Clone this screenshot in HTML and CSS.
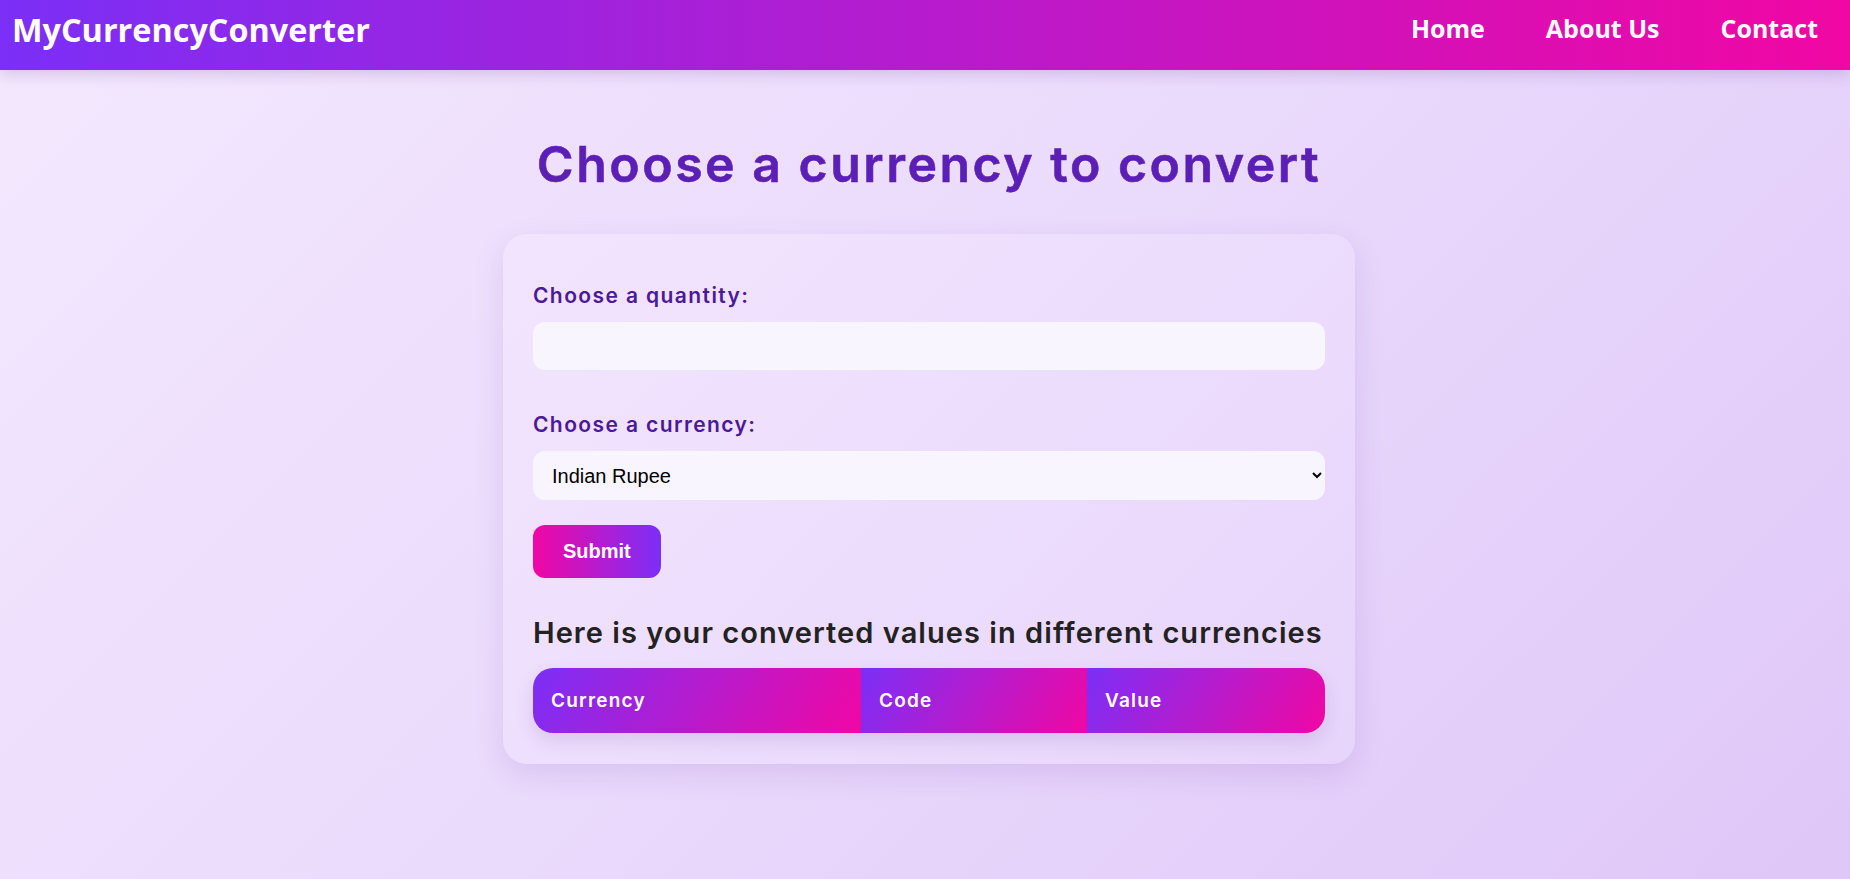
FILE: index.html
```html
<!DOCTYPE html>
<html lang="en">
<head>
<meta charset="UTF-8">
<title>MyCurrencyConverter</title>
<link rel="stylesheet" href="styles.css">
</head>
<body>
  <header class="navbar">
    <div class="brand">MyCurrencyConverter</div>
    <nav class="nav-links">
      <a href="#" class="nav-link">Home</a>
      <a href="#" class="nav-link">About Us</a>
      <a href="#" class="nav-link">Contact</a>
    </nav>
  </header>
  <main class="main">
    <h1 class="title">Choose a currency to convert</h1>
    <section class="card">
      <form class="form">
        <label class="label label-first" for="qty">Choose a quantity:</label>
        <input class="field" id="qty" type="number">
        <label class="label label-second" for="cur">Choose a currency:</label>
        <select class="field select" id="cur">
          <option>Indian Rupee</option>
          <option>US Dollar</option>
          <option>Euro</option>
        </select>
        <button type="button" class="submit">Submit</button>
      </form>
      <h3 class="result-title">Here is your converted values in different currencies</h3>
      <table class="results">
        <colgroup>
          <col class="col-currency">
          <col class="col-code">
          <col class="col-value">
        </colgroup>
        <thead>
          <tr>
            <th>Currency</th>
            <th>Code</th>
            <th>Value</th>
          </tr>
        </thead>
        <tbody></tbody>
      </table>
    </section>
  </main>
</body>
</html>
```

FILE: styles.css
```css
* {
  box-sizing: border-box;
}

html, body {
  margin: 0;
  padding: 0;
}

body {
  min-height: 879px;
  font-family: "Inter", "Noto Sans", sans-serif;
  background: linear-gradient(135deg, #f4e8fe 0%, #eadafc 50%, #dfc7f8 100%);
}

.navbar {
  height: 70px;
  display: flex;
  align-items: center;
  justify-content: space-between;
  padding: 0 32px 13px 12px;
  background: linear-gradient(90deg, #7b2ff7 0%, #f107a3 100%);
  box-shadow: 0 4px 14px rgba(80, 30, 120, 0.18);
  position: relative;
}

.brand {
  font-family: "Open Sans", sans-serif;
  font-weight: 700;
  font-size: 32.4px;
  color: #fff;
  line-height: 40px;
}

.nav-links {
  display: flex;
  gap: 61px;
  padding-bottom: 2px;
}

.nav-link {
  font-family: "Open Sans", sans-serif;
  font-weight: 700;
  font-size: 25px;
  color: #fff;
  text-decoration: none;
  line-height: 34px;
}

.main {
  display: flex;
  flex-direction: column;
  align-items: center;
  padding: 0 0 40px 8px;
}

.title {
  margin: 64px 0 0;
  font-family: "Inter", sans-serif;
  font-weight: 600;
  font-size: 50px;
  line-height: 60px;
  letter-spacing: 2.5px;
  color: #5b1fb5;
  -webkit-text-stroke: 0.6px #5b1fb5;
}

.card {
  margin-top: 40px;
  width: 852px;
  padding: 48px 30px 31px;
  border-radius: 24px;
  background: linear-gradient(135deg, rgba(244, 230, 255, 0.7), rgba(233, 216, 252, 0.6));
  box-shadow: 0 10px 30px rgba(110, 60, 170, 0.14);
}

.form {
  display: flex;
  flex-direction: column;
  align-items: flex-start;
}

.label {
  display: block;
  font-weight: 600;
  font-size: 21px;
  line-height: 26px;
  letter-spacing: 1.4px;
  color: #4a1a98;
}

.label-first {
  margin-top: 1px;
}

.label-second {
  margin-top: 42px;
}

.field {
  margin-top: 13px;
  width: 100%;
  height: 48px;
  border: none;
  border-radius: 12px;
  background: #f9f5fe;
  padding: 0 15px;
  font-family: "Liberation Sans", Arial, sans-serif;
  font-size: 20px;
  color: #000;
  outline: none;
}

.select {
  height: 49px;
}

.submit {
  margin-top: 25px;
  height: 53px;
  padding: 0 30px;
  border: none;
  border-radius: 12px;
  background: linear-gradient(90deg, #f107a3 0%, #7b2ff7 100%);
  color: #fff;
  font-family: "Liberation Sans", Arial, sans-serif;
  font-weight: 700;
  font-size: 20px;
  cursor: pointer;
}

.result-title {
  margin: 37px 0 0;
  font-weight: 600;
  font-size: 29px;
  line-height: 36px;
  letter-spacing: 1.05px;
  color: #222;
}

.results {
  margin-top: 17px;
  width: 100%;
  border-collapse: separate;
  border-spacing: 0;
  table-layout: fixed;
  border-radius: 20px;
  overflow: hidden;
  box-shadow: 0 8px 18px rgba(90, 40, 140, 0.13);
}

.col-currency {
  width: 328px;
}

.col-code {
  width: 226px;
}

.results th {
  height: 65px;
  padding: 0 18px;
  text-align: left;
  font-weight: 600;
  font-size: 19px;
  letter-spacing: 1.2px;
  color: #fff;
  background: linear-gradient(120deg, #7b2ff7 0%, #f107a3 100%);
}
```
